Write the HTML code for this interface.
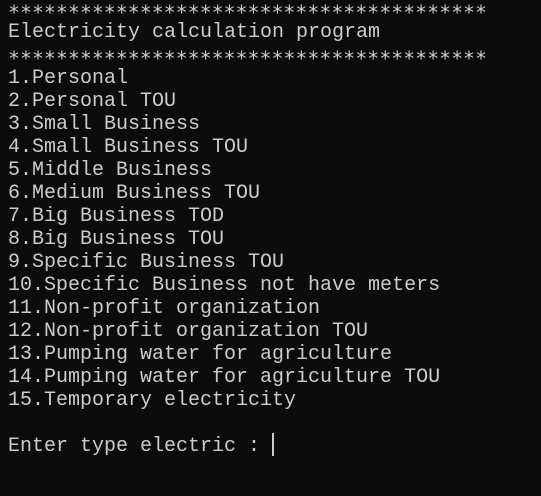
<!DOCTYPE html>
<html><head><style>
html,body{margin:0;padding:0;background:#0c0c0c;width:541px;height:496px;overflow:hidden}
.w{position:absolute;left:8px;top:-2px;font-family:"Liberation Mono",monospace;font-size:20px;color:#cccccc}
.w div{height:23px;line-height:23px;white-space:pre;overflow:visible}
.s{font-family:"DejaVu Sans Mono",monospace;font-size:19.9px;position:relative;top:3px}
.cur{position:absolute;left:272px;top:433px;width:2px;height:23px;background:#cccccc}
</style></head><body>
<div class="w">
<div class="s">****************************************</div>
<div>Electricity calculation program</div>
<div class="s">****************************************</div>
<div>1.Personal</div>
<div>2.Personal TOU</div>
<div>3.Small Business</div>
<div>4.Small Business TOU</div>
<div>5.Middle Business</div>
<div>6.Medium Business TOU</div>
<div>7.Big Business TOD</div>
<div>8.Big Business TOU</div>
<div>9.Specific Business TOU</div>
<div>10.Specific Business not have meters</div>
<div>11.Non-profit organization</div>
<div>12.Non-profit organization TOU</div>
<div>13.Pumping water for agriculture</div>
<div>14.Pumping water for agriculture TOU</div>
<div>15.Temporary electricity</div>
<div> </div>
<div>Enter type electric : </div>
</div>
<div class="cur"></div>
</body></html>
